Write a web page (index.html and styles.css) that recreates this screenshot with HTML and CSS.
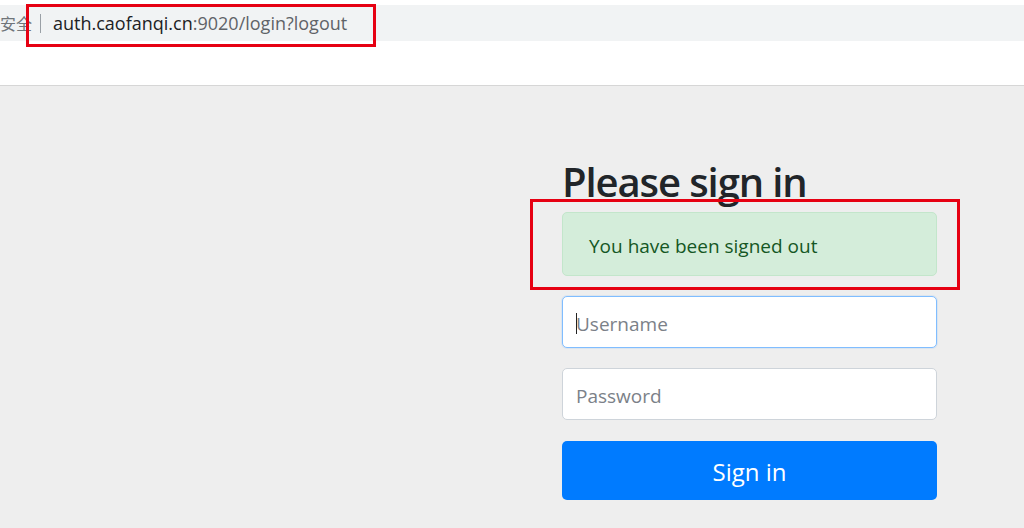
FILE: index.html
```html
<!DOCTYPE html>
<html lang="zh-CN">
<head>
<meta charset="utf-8">
<title>Please sign in</title>
<link rel="stylesheet" href="styles.css">
</head>
<body>
  <header class="chrome">
    <div class="omnibox">
      <span class="secure">安全</span>
      <span class="sep"></span>
      <span class="url"><span class="host">auth.caofanqi.cn</span>:9020/login?logout</span>
    </div>
  </header>
  <main class="page">
    <form class="signin">
      <h2 class="title">Please sign in</h2>
      <div class="alert">You have been signed out</div>
      <div class="field focused"><input class="control" type="text" placeholder="Username"></div>
      <div class="field"><input class="control" type="password" placeholder="Password"></div>
      <button class="btn" type="button">Sign in</button>
    </form>
  </main>
  <div class="mark mark-url"></div>
  <div class="mark mark-alert"></div>
</body>
</html>
```
FILE: styles.css
```css
html, body {
  margin: 0;
  padding: 0;
}
body {
  width: 1024px;
  height: 528px;
  overflow: hidden;
  position: relative;
  background: #eeeeee;
  font-family: "Open Sans", "Noto Sans CJK SC", sans-serif;
}
.chrome {
  background: #ffffff;
  height: 86px;
  border-bottom: 1px solid #d6d6d6;
  padding-top: 5px;
  box-sizing: border-box;
}
.omnibox {
  height: 36px;
  background: #f1f3f4;
  display: flex;
  align-items: center;
  font-size: 18px;
  color: #5f6368;
  white-space: nowrap;
}
.secure {
  margin-left: 0;
  font-family: "Noto Sans CJK SC", sans-serif;
  font-size: 16px;
  color: #70757a;
}
.sep {
  width: 1px;
  height: 19px;
  background: #9aa0a6;
  margin: 0 12px 0 8px;
}
.url .host {
  color: #202124;
}
.page {
  height: 442px;
  padding-left: 562px;
  box-sizing: border-box;
}
.signin {
  width: 375px;
  display: flex;
  flex-direction: column;
}
.title {
  margin: 71px 0 0 0;
  font-size: 40px;
  line-height: 50px;
  font-weight: 600;
  color: #212529;
  letter-spacing: -1.1px;
}
.alert {
  margin-top: 5px;
  height: 64px;
  box-sizing: border-box;
  background: #d4edda;
  border: 1px solid #c3e6cb;
  border-radius: 5px;
  color: #155724;
  font-size: 19px;
  display: flex;
  align-items: center;
  padding: 3px 0 0 26px;
}
.field {
  position: relative;
  margin-top: 20px;
}
.control {
  display: block;
  width: 100%;
  height: 52px;
  box-sizing: border-box;
  border: 1px solid #ced4da;
  border-radius: 5px;
  background: #ffffff;
  padding: 3px 13px 0;
  font-family: inherit;
  font-size: 19px;
  color: #495057;
  outline: none;
}
.control::placeholder {
  color: #7b8188;
}
.focused .control {
  border-color: #80bdff;
  box-shadow: 0 0 0 1px rgba(0, 123, 255, 0.08);
}
.focused::before {
  content: "";
  position: absolute;
  left: 14px;
  top: 17px;
  width: 1px;
  height: 21px;
  background: #222;
}
.btn {
  margin-top: 21px;
  height: 59px;
  border: none;
  border-radius: 5px;
  background: #007bff;
  color: #ffffff;
  font-family: inherit;
  font-size: 24px;
  padding-top: 2px;
  cursor: pointer;
}
.mark {
  position: absolute;
  border: 3px solid #e60012;
  box-sizing: border-box;
}
.mark-url {
  left: 26px;
  top: 4px;
  width: 350px;
  height: 43px;
}
.mark-alert {
  left: 530px;
  top: 199px;
  width: 430px;
  height: 91px;
}
```
